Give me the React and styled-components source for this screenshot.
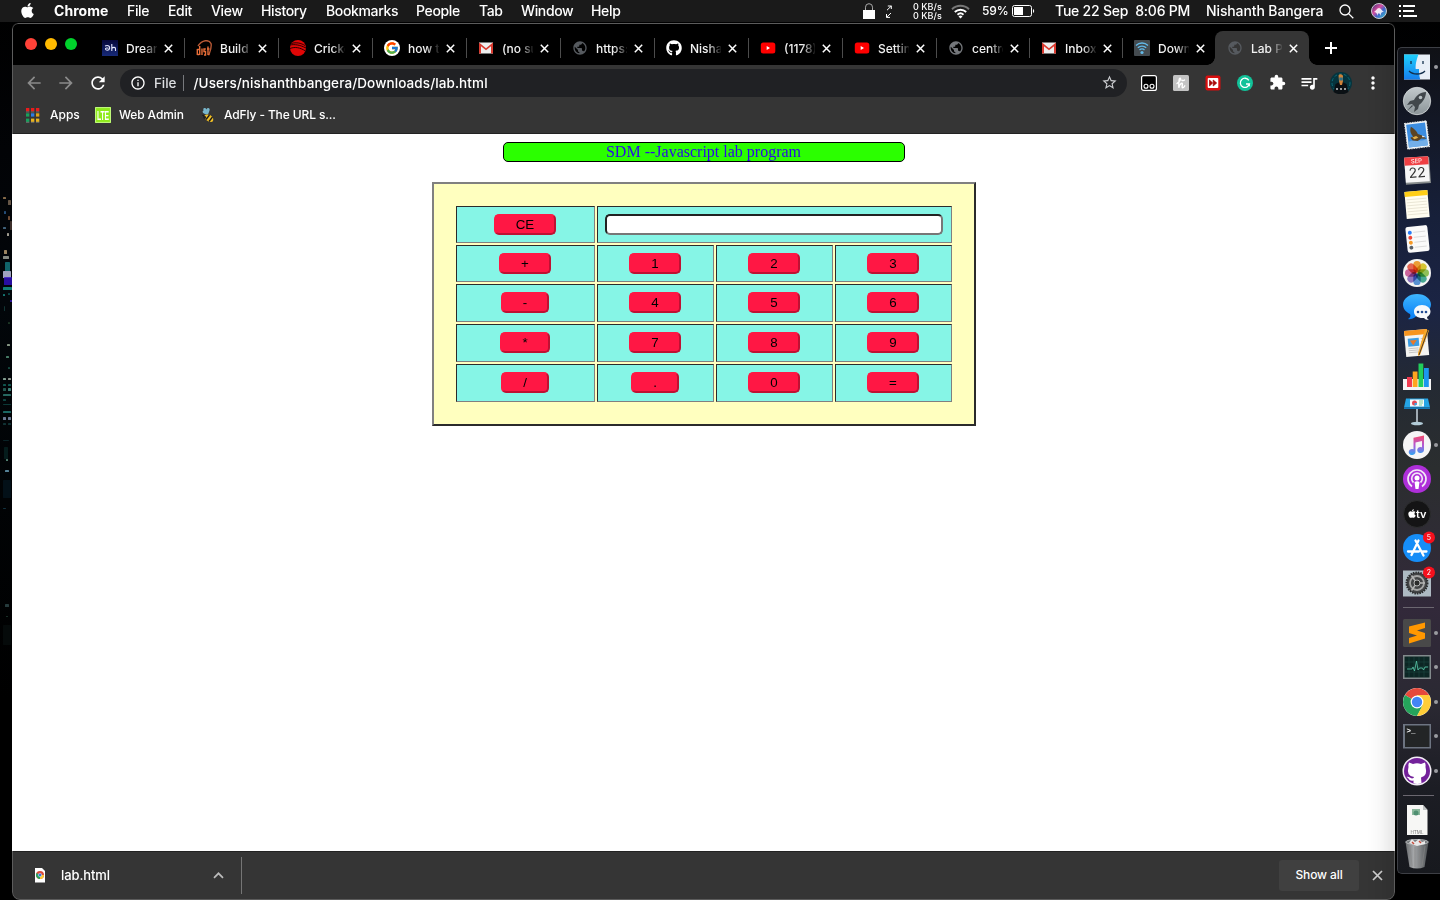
import React from "react";
import styled, { createGlobalStyle, css } from "styled-components";
import { FaApple, FaGithub } from "react-icons/fa";
import { FcGoogle } from "react-icons/fc";
import {
  MdArrowBack, MdArrowForward, MdRefresh, MdInfoOutline, MdStarBorder, MdExtension,
  MdQueueMusic, MdMoreVert, MdPublic,
} from "react-icons/md";

const Global = createGlobalStyle`
  html, body { margin: 0; padding: 0; background: #000; overflow: hidden; }
  * { box-sizing: border-box; }
  svg { display: block; flex: none; }
`;

const Desktop = styled.div`
  width: 1440px;
  height: 900px;
  overflow: hidden;
  display: flex;
  flex-direction: column;
  background: linear-gradient(#000 0, #020306 150px, #02060a 300px, #000 700px);
  color: #fff;
  font-family: Inter, "Liberation Sans", sans-serif;
`;

/* ---------- macOS menu bar ---------- */

const MenuBar = styled.header`
  flex: none;
  height: 22px;
  display: flex;
  align-items: center;
  background: #1a1a1a;
  font-size: 14px;
  font-weight: 500;
  line-height: 22px;
  white-space: pre;
`;
const AppleSlot = styled.div`
  width: 54px;
  padding: 0 0 2px 19px;
`;
const MenuItem = styled.span`
  width: ${(p) => p.$w}px;
  flex: none;
  font-weight: ${(p) => (p.$bold ? 700 : 500)};
  letter-spacing: ${(p) => (p.$bold ? 0.05 : -0.35)}px;
`;
const StatusItem = styled.div`
  width: ${(p) => p.$w}px;
  flex: none;
  font-size: ${(p) => p.$size || 14}px;
  letter-spacing: ${(p) => p.$ls || 0}px;
`;
const NetSpeed = styled.div`
  width: 38px;
  font-size: 9px;
  line-height: 9px;
  letter-spacing: 0.05px;
`;

/* ---------- workspace ---------- */

const Workspace = styled.div`
  flex: 1;
  display: flex;
  min-height: 0;
`;
const Wallpaper = styled.div`
  width: 12px;
  flex: none;
`;
const Window = styled.main`
  position: relative;
  width: 1383px;
  flex: none;
  margin-top: 1px;
  display: flex;
  flex-direction: column;
  border-radius: 6px 6px 8px 8px;
  overflow: hidden;
  background: #353535;
`;
const WindowShade = styled.div`
  position: absolute;
  inset: 0 0 0 auto;
  width: 28px;
  pointer-events: none;
  background: linear-gradient(to left, rgba(0, 0, 0, 0.1), rgba(0, 0, 0, 0.03) 14px, transparent);
`;
const WindowFrame = styled.div`
  position: absolute;
  inset: 0;
  pointer-events: none;
  border-radius: 6px 6px 8px 8px;
  border: 1px solid #5c5c5c;
  mix-blend-mode: lighten;
`;
const TabStrip = styled.div`
  height: 42px;
  flex: none;
  display: flex;
  background: #000;
`;
const TrafficLights = styled.div`
  width: 78px;
  display: flex;
  gap: 8px;
  padding: 15px 0 0 13px;
`;
const Light = styled.i`
  width: 12px;
  height: 12px;
  border-radius: 50%;
  background: ${(p) => p.$c};
`;
const Tab = styled.div`
  position: relative;
  width: ${(p) => p.$w}px;
  flex: none;
  height: 34px;
  margin-top: 8px;
  padding-left: 12px;
  display: flex;
  align-items: center;
  font-size: 12px;
  font-weight: 500;
  ${(p) => p.$active && css`
    background: #353535;
    border-radius: 8px 8px 0 0;
    &::before, &::after {
      content: "";
      position: absolute;
      bottom: 0;
      width: 8px;
      height: 8px;
    }
    &::before { left: -8px; background: radial-gradient(circle at 0 0, transparent 7.5px, #353535 8px); }
    &::after { right: -8px; background: radial-gradient(circle at 100% 0, transparent 7.5px, #353535 8px); }
  `}
`;
const TabTitle = styled.span`
  width: 31px;
  flex: none;
  margin-left: 8px;
  overflow: hidden;
  white-space: nowrap;
  color: #f1f1f1;
  -webkit-mask-image: linear-gradient(to right, #000 58%, transparent 104%);
  mask-image: linear-gradient(to right, #000 58%, transparent 104%);
`;
const TabClose = styled.svg`
  width: 9px;
  height: 9px;
  margin-left: 7px;
`;
const TabRule = styled.i`
  width: 1px;
  height: 20px;
  margin-left: ${(p) => p.$gap}px;
  flex: none;
  background: #4c4c4c;
`;
const NewTab = styled.div`
  padding: 19px 0 0 16px;
`;

const Toolbar = styled.div`
  height: 35px;
  flex: none;
  display: flex;
  align-items: center;
  padding-left: 12px;
`;
const NavSlot = styled.div`
  width: 32px;
  color: ${(p) => (p.$dim ? "#8b8b8b" : "#fff")};
`;
const AddressBar = styled.div`
  width: 1007px;
  height: 28px;
  border-radius: 14px;
  background: #202124;
  display: flex;
  align-items: center;
  padding: 0 9px 0 10px;
  font-size: 13.5px;
  font-weight: 500;
`;
const Scheme = styled.span`
  width: 29px;
  margin-left: 8px;
  color: #dcdee1;
  letter-spacing: -0.1px;
`;
const SchemeRule = styled.i`
  width: 1px;
  height: 16px;
  background: #77797d;
`;
const Path = styled.span`
  flex: 1;
  margin-left: 9.5px;
  letter-spacing: 0.1px;
`;
const Extensions = styled.div`
  display: flex;
  align-items: center;
  margin-left: 6px;
`;
const ExtSlot = styled.div`
  width: 32px;
  display: flex;
  justify-content: center;
`;
const Bookmarks = styled.div`
  height: 34px;
  flex: none;
  display: flex;
  align-items: center;
  padding: 0 0 4px 14px;
  border-bottom: 1px solid #222;
  font-size: 12px;
  font-weight: 500;
`;
const Bookmark = styled.div`
  width: ${(p) => p.$w}px;
  display: flex;
  align-items: center;
  gap: 8px;
  white-space: nowrap;
  letter-spacing: ${(p) => p.$ls || 0}px;
`;

/* ---------- the page ---------- */

const Page = styled.section`
  height: 717px;
  flex: none;
  background: #fff;
  padding-top: 7.5px;
  display: flex;
  flex-direction: column;
  align-items: center;
`;
const PageTitle = styled.div`
  width: 402px;
  height: 20px;
  flex: none;
  border: 1px solid #000;
  border-radius: 5px;
  background: #2bff00;
  color: #2a0be6;
  font: 16px/18px "Liberation Serif", serif;
  text-align: center;
`;
const Calculator = styled.div`
  margin: 20.5px 0 0 1px;
  border: 2px solid;
  border-color: #808080 #2b2b2b #2b2b2b #808080;
  background: #ffffbf;
  padding: 22px;
  display: grid;
  grid-template-columns: 139px 117px 117px 117px;
  grid-template-rows: 37px 37px 38px 38px 38px;
  gap: 2px;
`;
const Cell = styled.div`
  grid-column: span ${(p) => p.$span || 1};
  border: 1px solid;
  border-color: #2b2b2b #808080 #808080 #2b2b2b;
  background: #86f5e6;
  padding: 7px 8px 7px 7px;
  display: flex;
  justify-content: center;
  align-items: flex-start;
`;
const Key = styled.button`
  width: ${(p) => p.$w}px;
  height: 21px;
  padding: 0;
  border: 2px solid;
  border-color: #ff1744 #bf1133 #bf1133 #ff1744;
  border-radius: 5px;
  background: #ff1744;
  color: #000;
  font: 13.333px/17px "Liberation Sans", Arial, sans-serif;
`;
const Display = styled.input`
  width: 338px;
  height: 21px;
  border: 2px solid;
  border-color: #222 #777 #777 #222;
  border-radius: 5px;
  background: #fff;
`;

/* ---------- download shelf ---------- */

const Shelf = styled.footer`
  flex: 1;
  display: flex;
  align-items: center;
  border-top: 1px solid #222;
  padding: 0 11px 2px 22px;
`;
const Download = styled.div`
  width: 208px;
  height: 37px;
  display: flex;
  align-items: center;
  border-right: 1px solid #757575;
  font-size: 13px;
  font-weight: 500;
`;
const FileName = styled.span`
  width: 152px;
  margin-left: 15px;
  letter-spacing: -0.1px;
`;
const Spacer = styled.div`
  flex: 1;
`;
const ShowAll = styled.div`
  width: 80px;
  height: 31px;
  border-radius: 3px;
  background: #404040;
  font-size: 12px;
  font-weight: 500;
  line-height: 30px;
  text-align: center;
  margin-right: 12px;
  letter-spacing: -0.1px;
`;

/* ---------- dock ---------- */

const Dock = styled.aside`
  width: 43px;
  height: 827px;
  flex: none;
  margin: 25px 0 0 2px;
  padding: 1.5px 0;
  border: 1px solid #3d3f45;
  border-right: 0;
  border-radius: 5px 0 0 5px;
  background: linear-gradient(#101116 0, #17203a 170px, #1b2444 260px, #242a33 340px, #2b2e2f 420px, #32293a 560px, #2b2933 650px, #1c1d24 740px, #17191e 100%);
`;
const DockItem = styled.div`
  height: 34.4px;
  display: flex;
  align-items: center;
  padding-left: 4px;
`;
const DockDot = styled.i`
  width: 4px;
  height: 4px;
  border-radius: 50%;
  margin-left: 2px;
  background: #9a9ba0;
`;
const DockRule = styled.div`
  height: ${(p) => p.$h}px;
  display: flex;
  align-items: center;
  &::after {
    content: "";
    height: 1px;
    width: 31px;
    margin-left: 5px;
    background: #6b6770;
  }
`;
const Picture = styled.svg`
  width: 30px;
  height: 34px;
  overflow: visible;
`;

/* ---------- drawings ---------- */

const lights = [
  [3, 197, 3, 2, "#a9865a"], [8, 200, 3, 5, "#7f6b58"], [4, 211, 2, 3, "#2d5f93"], [8, 216, 2, 4, "#8c5c3d"],
  [3, 227, 3, 2, "#507b9a"], [7, 233, 2, 3, "#c8c3b4"], [10, 221, 2, 9, "#4c3b34"], [4, 250, 3, 4, "#c1a478"],
  [3, 256, 6, 3, "#a6aaa0"], [5, 262, 5, 9, "#147b82"], [3, 271, 8, 7, "#c7c9ee"], [4, 277, 8, 8, "#3210c5"],
  [3, 287, 9, 3, "#159d90"], [3, 294, 2, 2, "#1c9791"], [8, 293, 2, 2, "#135c5b"], [10, 300, 2, 2, "#391ac0"],
  [4, 306, 1, 5, "#16413e"], [8, 322, 2, 2, "#24442c"], [7, 344, 3, 2, "#a9bba5"], [6, 356, 3, 2, "#589a7d"],
  [8, 367, 2, 2, "#1a5b4d"], [3, 378, 3, 2, "#a1c3b1"], [8, 378, 3, 2, "#b3bdb2"], [3, 384, 3, 2, "#146a62"], [8, 384, 3, 2, "#146a62"],
  [3, 388, 3, 3, "#2c6c61"], [8, 388, 3, 3, "#4c9c91"], [3, 394, 8, 2, "#2f7f77"], [3, 399, 3, 2, "#11544f"], [3, 404, 8, 1, "#0e4643"],
  [3, 411, 8, 2, "#22817a"], [3, 417, 3, 3, "#8497b6"], [8, 417, 3, 3, "#8497b6"], [3, 423, 3, 2, "#143f40"], [8, 423, 3, 2, "#143f40"], [3, 440, 6, 1, "#0c2c2f"],
  [4, 447, 4, 12, "#062322"], [6, 459, 2, 2, "#68a38e"], [5, 470, 4, 2, "#6ba2bb"], [3, 480, 8, 18, "#04141d"],
  [3, 508, 3, 1, "#164050"], [5, 604, 4, 3, "#304a4b"], [6, 616, 2, 1, "#24463a"], [3, 625, 8, 20, "#060c0c"],
];
const CityLights = () => (
  <svg width="12" height="877" viewBox="0 22 12 877">
    {lights.map(([x, y, w, h, f]) => <rect key={`${x}-${y}`} x={x} y={y} width={w} height={h} rx="0.6" fill={f} opacity="0.8" />)}
  </svg>
);

const Cross = () => <TabClose viewBox="0 0 9 9"><path d="M.8.8l7.400 7.400M8.200.8L.8 8.200" stroke="#fff" strokeWidth="1.500" /></TabClose>;
const Plus = () => <svg width="12" height="12" viewBox="0 0 12 12"><path d="M6 0v12M0 6h12" stroke="#fff" strokeWidth="2" /></svg>;
const Lock = () => (
  <svg width="12" height="16" viewBox="0 0 12 16"><path d="M2.500 7V4.200a3.500 3.500 0 0 1 7 0V7" fill="none" stroke="#aaa" /><path d="M0 7h12v9H0z" fill="#fff" /></svg>
);
const Expand = () => (
  <svg width="6" height="13" viewBox="0 0 6 13" fill="none" stroke="#fff" strokeWidth="1"><path d="M1.800 1H5.300V4M5.300 1L1 5.200M.5 9v3.400H4M.7 12.200L5 8" /></svg>
);
const Wifi = () => (
  <svg width="19" height="15" viewBox="0 0 19 15" fill="none" stroke="#fff" strokeWidth="1.900"><path d="M1 5.200a12.300 12.300 0 0 1 17 0" stroke="#777" /><path d="M3.800 8a8.300 8.300 0 0 1 11.400 0M6.500 10.700a4.500 4.500 0 0 1 6 0" /><path d="M9.500 14.500l-2-2a3 3 0 0 1 4 0z" fill="#fff" stroke="none" /></svg>
);
const Battery = () => (
  <svg width="23" height="12" viewBox="0 0 23 12"><rect x=".5" y=".5" width="19" height="11" rx="2" fill="none" stroke="#fff" /><path d="M2 2h9v8H2z" fill="#fff" /><path d="M21 4v4c1.600-.5 1.600-3.500 0-4z" fill="#fff" /></svg>
);
const Search = () => (
  <svg width="15" height="15" viewBox="0 0 15 15" fill="none" stroke="#fff" strokeWidth="1.300"><circle cx="6" cy="6" r="5" /><path d="M9.600 9.600l4.700 4.700" /></svg>
);
const Siri = () => (
  <svg width="16" height="16" viewBox="0 0 16 16">
    <defs><linearGradient id="siri" x1="0" y1="0" x2="1" y2="1"><stop offset="0" stopColor="#342a72" /><stop offset=".4" stopColor="#d54c9e" /><stop offset=".6" stopColor="#4065c8" /><stop offset="1" stopColor="#39d3cd" /></linearGradient></defs>
    <circle cx="8" cy="8" r="7.500" fill="url(#siri)" stroke="#c9c9d2" />
    <path d="M3 9c2-1 3-4 5-4s3 3 5 4c-2 0-3 0-3.500 4C9 10 7 9 6.500 13 6 10 5 9 3 9z" fill="#fff" opacity=".85" />
  </svg>
);
const ListIcon = () => (
  <svg width="18" height="12" viewBox="0 0 18 12" fill="#fff"><path d="M0 0h2v2H0zM4 0h12v2H4zM0 5h2v2H0zM4 5h11v2H4zM0 10h2v2H0zM4 10h14v2H4z" /></svg>
);

const Fav = ({ kind }) => {
  switch (kind) {
    case "dream":
      return <svg width="16" height="16" viewBox="0 0 16 16"><defs><linearGradient id="dh" x2="0" y2="1"><stop stopColor="#07083a" /><stop offset="1" stopColor="#172a78" /></linearGradient></defs><path d="M0 0h16v16H0z" fill="url(#dh)" /><path d="M3 6c3.500-1.200 5 .3 4.600 2.500-.6 2.200-4.100 2.200-4.100.3C3.500 7.800 5.500 7.800 6.500 8.300M9.800 4v7M9.800 8.300c1.500-1.500 3.700-1.200 3.700.5V11" fill="none" stroke="#e8eaff" strokeWidth="1.100" /></svg>;
    case "build":
      return <svg width="16" height="16" viewBox="0 0 16 16" fill="none" stroke="#e66d38"><path d="M2 6C6 0 13-1 15 3.500c1 3-1 8-2 11" stroke="#b75935" strokeWidth="1.400" /><path d="M3.700 6v9M1.300 9.500h1.800M1.300 9v6M1.300 14.500h2M6 8.500V15M8 15h1.500v-3.500H8V9h1.800M12 6.500v8.500M11 9h2.500M12 14.500h1.500" strokeWidth="1.400" /></svg>;
    case "cricket":
      return <svg width="16" height="16" viewBox="0 0 16 16"><circle cx="8" cy="8" r="8" fill="#e00606" /><path d="M0 5c5-1 10 0 16 3M0 8.500c5-2 10-1 15.500 2.500M1.500 3.500C6 2 11 3 15 5.500" fill="none" stroke="#160000" strokeWidth=".9" /></svg>;
    case "google":
      return <svg width="16" height="16" viewBox="0 0 16 16"><circle cx="8" cy="8" r="8" fill="#fff" /><FcGoogle x="1" y="1" size={14} /></svg>;
    case "gmail":
      return <svg width="16" height="16" viewBox="0 0 16 16"><path d="M1 2.500h14v11H1z" fill="#eee" /><path d="M1 13.500v-11l7 5.700 7-5.700v11h-2V6.300L8 10.200 3 6.300v7.200z" fill="#d93a2f" /></svg>;
    case "github":
      return <FaGithub size={16} color="#fff" />;
    case "youtube":
      return <svg width="16" height="16" viewBox="0 0 16 16"><rect x=".8" y="2.500" width="14.500" height="11" rx="2.500" fill="#f00" /><path d="M6.700 6v4L10 8z" fill="#fff" /></svg>;
    case "wifi":
      return <svg width="16" height="16" viewBox="0 0 16 16"><rect width="16" height="16" rx="1" fill="#444b50" /><g fill="none" stroke="#62b9e8" strokeWidth="1.300"><path d="M2 5.500a8.500 8.500 0 0 1 12 0M3.800 7.800a6 6 0 0 1 8.400 0M5.500 10a3.500 3.500 0 0 1 5 0" /></g><circle cx="8" cy="12.500" r="1.600" fill="#62b9e8" /></svg>;
    case "globeLight":
      return <MdPublic size={16} color="#74777b" />;
    default:
      return <MdPublic size={16} color="#565a5f" />;
  }
};

const AppsGrid = () => (
  <svg width="16" height="16" viewBox="0 0 16 16">
    {["#e91c1c", "#e91c1c", "#e91c1c", "#18a05c", "#2c7be5", "#e0a114", "#18a05c", "#e8b21d", "#e8b21d"].map((c, i) => (
      <rect key={i} x={(i % 3) * 5} y={1 + Math.floor(i / 3) * 5.3} width="3.300" height="3.300" fill={c} />
    ))}
    <path d="M0 5h3.300M5 5h3.300M10 5h3.300M0 15.300h3.300M5 15.300h3.300M10 15.300h3.300" stroke="#888" strokeWidth=".7" />
  </svg>
);
const Lte = () => (
  <svg width="16" height="16" viewBox="0 0 16 16"><path d="M0 0h16v16H0z" fill="#8fea1b" /><rect x=".7" y=".7" width="14.600" height="14.600" fill="none" stroke="#d8ffae" strokeWidth=".7" /><text transform="translate(8 13) scale(1 2)" textAnchor="middle" fontFamily="Liberation Sans" fontWeight="700" fontSize="6.800" fill="#fff">LTE</text></svg>
);
const Bee = () => (
  <svg width="16" height="16" viewBox="0 0 16 16"><path d="M7 7.500C3 7 1.500 4.500 3.500 3.500c-1-3 2-3 3-1 1-2.500 4-1.500 3 1s-1 4-2.500 4z" fill="#78b6cb" /><path d="M4.500 8.500c2-2 6-1 7.500 1 2 2 1.500 5.500-.5 5.500-4 0-7.500-3-7-6.500z" fill="#edbd26" /><path d="M6 12.500l3.500-4.500M9 14.500l3.500-4.500M2.500 8l2 1.500" stroke="#191919" strokeWidth="1.300" /><circle cx="4.700" cy="10.500" r="1.400" fill="#222" /></svg>
);

const ExtDots = () => <svg width="16" height="16" viewBox="0 0 16 16"><rect x=".6" y=".6" width="14.800" height="14.800" rx="2" fill="#000" stroke="#fff" strokeWidth="1.200" /><g fill="none" stroke="#fff" strokeWidth="1.100"><circle cx="5" cy="11.300" r="2" /><circle cx="11" cy="11.300" r="2" /></g></svg>;
const Honey = () => <svg width="16" height="16" viewBox="0 0 16 16"><rect width="16" height="16" rx="1.500" fill="#c3c3c3" /><path d="M4 8.500C7 6.500 8.200 3.500 7.200 3.200S5.600 6 5.800 12.800C6.200 9.500 9 7 9.400 8.800c.2 1.500-1 4 .4 4 .9 0 1.500-1 2-2M8.800 5.200c1 .6 1.800.6 2.700-.2" fill="none" stroke="#fff" strokeWidth="1.400" strokeLinecap="round" /></svg>;
const Forward = () => <svg width="16" height="16" viewBox="0 0 16 16"><rect x=".5" y=".5" width="15" height="15" rx="2" fill="#d80e0e" /><rect x="2.700" y="3" width="10.600" height="10" rx="1" fill="#fff" /><path d="M4.500 5v6l3.200-3zM8.200 5v6l3.500-3z" fill="#a80505" stroke="#a80505" strokeWidth=".7" /></svg>;
const Grammar = () => <svg width="16" height="16" viewBox="0 0 16 16"><circle cx="8" cy="8" r="8" fill="#12c299" /><path d="M11.800 5.300A4.600 4.600 0 1 0 12.400 9H9M12.300 8.500v2.800" fill="none" stroke="#fff" strokeWidth="1.300" /></svg>;
const Avatar = () => <svg width="22" height="22" viewBox="0 0 22 22"><circle cx="11" cy="11" r="11" fill="#06343d" /><circle cx="11" cy="11" r="9" fill="none" stroke="#0d6a7a" strokeDasharray="3 2" /><path d="M3.500 20l2-8 4-2 1.500 3 1.500-3 4 2 2 8c-4 3-11 3-15 0z" fill="#0a1014" /><path d="M8.500 3.500c1-2 5-1.500 4.500 1.500v4l-1 4h-2l-1-4z" fill="#cf8238" /><path d="M9.300 5.500h3.500v3H9.300z" fill="#2e6f86" /><path d="M6 17h2M10 17h2M14 17h2" stroke="#ccc" strokeWidth="1.300" /></svg>;

const FileIcon = () => (
  <svg width="12" height="15" viewBox="0 0 12 15"><path d="M1 0h7l3 3v11.500H1z" fill="#fff" /><circle cx="6" cy="7" r="4" fill="#dd4b39" /><path d="M6 7L2.500 5A4 4 0 0 0 6 11z" fill="#22a45d" /><path d="M6 7h4a4 4 0 0 1-4 4z" fill="#fc3" /><circle cx="6" cy="7" r="1.700" fill="#3c78e0" stroke="#fff" strokeWidth=".4" /></svg>
);

const Pic = ({ children }) => <Picture viewBox="-15 -17 30 34">{children}</Picture>;
const Badge = ({ n }) => (
  <g><circle cx="12" cy="-10.500" r="6" fill="#f5101d" /><text x="12" y="-8" textAnchor="middle" fontFamily="Inter" fontSize="7" fill="#fff">{n}</text></g>
);
const petals = ["#f59a23", "#dcc81e", "#8bc34a", "#36a78e", "#4a8edb", "#8a6cc4", "#d0599b", "#ec5a45"];

const DockIcon = ({ kind }) => {
  switch (kind) {
    case "finder":
      return <Pic><defs><linearGradient id="fd" x2="0" y2="1"><stop stopColor="#1fd0fd" /><stop offset="1" stopColor="#167fee" /></linearGradient></defs><path d="M-13-12.500h26v25h-26z" fill="#e8eff7" /><path d="M-13-12.500H1.500C-1-6-1.500-2-1.300 2H2c0 4 .3 7 1.200 10.500H-13z" fill="url(#fd)" /><path d="M-6-6v3M6-6v3M-8 4c4 4 12 4 16 0" fill="none" stroke="#15314e" strokeWidth="1.300" /></Pic>;
    case "launchpad":
      return <Pic><defs><linearGradient id="lp" x2="0" y2="1"><stop stopColor="#c3cacd" /><stop offset="1" stopColor="#8b9498" /></linearGradient></defs><circle r="13.700" fill="url(#lp)" stroke="#d5d9db" strokeWidth=".8" /><path d="M9-9C3-9-1-5-3-1l-4 1-3 4 5-1 3 3-1 5 4-3 1-4C5 2 9-3 9-9z" fill="#41474b" /><circle cx="3.500" cy="-3.500" r="1.800" fill="#b8c0c3" /><path d="M-5 4l-5 6 6-5z" fill="#41474b" /></Pic>;
    case "mail":
      return <Pic><g transform="rotate(-7)"><path d="M-11-13h22v26h-22z" fill="#f5f7f8" stroke="#dce2e6" strokeDasharray="1.500 1" /><path d="M-9.500-11.500H9.500v23H-9.500z" fill="#3c8de0" /><path d="M-9.500 6C-3 3 3 8 9.500 5v6.500H-9.500z" fill="#73afe9" /><path d="M-5-9c3 2 5 5 6 8l4 2 4 4-5-1-4 2-5-1-2-3 3-1c-2-3-3-6-1-10z" fill="#5b4425" /><path d="M-5 2l4-1 2 2-4 1z" fill="#e3b04b" /><path d="M5 1l3 2h-3z" fill="#fff" /></g></Pic>;
    case "calendar":
      return <Pic><g transform="rotate(-4)"><path d="M-12-12h25v26h-25z" fill="#878c8c" /><path d="M-12-13h24v25h-24z" fill="#f6f6f6" /><path d="M-12-13h24v8h-24z" fill="#ef3f43" /><text y="-6.800" textAnchor="middle" fontFamily="Inter" fontSize="6" fill="#fff">SEP</text><text y="7.500" textAnchor="middle" fontFamily="Inter" fontSize="14" fill="#333">22</text></g></Pic>;
    case "notes":
      return <Pic><g transform="rotate(-5)"><path d="M-11.500-13h23v27h-23z" fill="#fffdf0" /><path d="M-11.500-13h23v5h-23z" fill="#ffce16" /><path d="M-10-5h20M-10-2h20M-10 1h20M-10 4h20M-10 7h20M-10 10h20" stroke="#e1dccb" strokeWidth=".7" /></g></Pic>;
    case "reminders":
      return <Pic><g transform="rotate(-6)"><rect x="-10.500" y="-13" width="22" height="26" rx="2.500" fill="#fafafa" /><path d="M-3-7H9M-3-2H9M-3 3H9M-3 8H9" stroke="#d5d5d5" strokeWidth=".8" />{["#2a7cf6", "#ef4638", "#f69a27", "#596068"].map((c, i) => <circle key={c} cx="-6.500" cy={-7 + i * 5} r="2" fill={c} />)}</g></Pic>;
    case "photos":
      return <Pic><circle r="14" fill="#f4f4f2" />{petals.map((c, i) => <rect key={c} x="-3.700" y="-12" width="7.400" height="11.500" rx="3.600" fill={c} opacity=".9" style={{ mixBlendMode: "multiply" }} transform={`rotate(${i * 45})`} />)}</Pic>;
    case "messages":
      return <Pic><defs><linearGradient id="ms" x2="0" y2="1"><stop stopColor="#3eb6ff" /><stop offset="1" stopColor="#087df5" /></linearGradient></defs><path d="M0-13c8 0 14 5 14 10.500S8 8 0 8c-1 2-5 5-9 4 2-1 3-3 2-5-4-2-7-5-7-9.500C-14-8-8-13 0-13z" fill="url(#ms)" /><path d="M5-2c5 0 8.500 3 8.500 6.500C13.500 7 12 9 10 10c0 1.500 1 2.500 2 3-3 0-4-1-5-2C1 11.500-3 9-3 4.500-3 1 0-2 5-2z" fill="#f7f9fb" /><g fill="#234d94"><circle cx="1" cy="5" r="1.300" /><circle cx="5" cy="5" r="1.300" /><circle cx="9" cy="5" r="1.300" /></g></Pic>;
    case "pages":
      return <Pic><g transform="rotate(-5)"><path d="M-12-12h23v26h-23z" fill="#f4f4f1" /><path d="M-12-12h23v5h-23z" fill="#f7951e" /><path d="M-9-4H2v8H-9z" fill="#3c9de4" /><path d="M-7-2h7l-4 5z" fill="#e97928" /><path d="M4-3h5M4 0h5M-9 6H1M-9 8H1M-9 10H1" stroke="#bbb" strokeWidth=".8" /></g><path d="M8-13l4 1.500L3 13l-2 1V11z" fill="#f4a82b" /><path d="M11-12L2 13" stroke="#503b26" /></Pic>;
    case "numbers":
      return <Pic><path d="M-14 3h28v11h-28z" fill="#f4f4f4" /><path d="M-10 1h5v10h-5z" fill="#f03b50" /><path d="M-4.300-4.500h4.800v15.500h-4.800z" fill="#ffa51f" /><path d="M1.500-12.500h4.800v23.500H1.500z" fill="#21cf5b" /><path d="M7-8h4.800v19H7z" fill="#1c97ef" /></Pic>;
    case "keynote":
      return <Pic><path d="M-11-12.500h22l2 9h-26z" fill="#25a5e6" /><path d="M-7-11.500H7v7H-7z" fill="#f8fafb" /><circle cx="-2.500" cy="-8" r="2.500" fill="#e24a55" /><path d="M-2.500-8h2.500a2.500 2.500 0 0 1-2.500 2.500z" fill="#39a7e8" /><path d="M2-10h4M2-8h4M2-6h3" stroke="#7c9" /><path d="M-13-3.500h26v1.500h-26z" fill="#1479b7" /><path d="M0-2v14" stroke="#b7c2ca" strokeWidth="1.700" /><ellipse cy="12.500" rx="6" ry="1.800" fill="#b2ccd8" /></Pic>;
    case "music":
      return <Pic><defs><linearGradient id="mu" x2="0" y2="1"><stop stopColor="#f34a6a" /><stop offset=".5" stopColor="#b357d6" /><stop offset="1" stopColor="#2fa5f3" /></linearGradient></defs><circle r="14" fill="#f6f5f6" /><path d="M-3.500-7.200L7-9.500V5a3.400 3 0 1 1-2-2.700V-4l-6.500 1.400V7a3.400 3 0 1 1-2-2.700z" fill="url(#mu)" /></Pic>;
    case "podcasts":
      return <Pic><circle r="14" fill="#ae2fd9" /><g fill="none" stroke="#f2e6f6" strokeWidth="1.700"><path d="M-5 7.500a9 9 0 1 1 10 0M-3.500 3.500a5.300 5.300 0 1 1 7 0" /></g><circle cy="-1" r="2.500" fill="#fff" /><path d="M-2.500 3q2.500-1.500 5 0L1.500 10h-3z" fill="#fff" /></Pic>;
    case "tv":
      return <Pic><circle r="13.500" fill="#141415" stroke="#2c2d2e" /><FaApple x="-10" y="-5.500" size={10} color="#fff" /><text x="-1" y="3.500" fontFamily="Inter" fontWeight="600" fontSize="11" fill="#fff">tv</text></Pic>;
    case "store":
      return <Pic><circle r="14" fill="#168df7" /><path d="M1.500-7.500L-5.500 7M-1.500-7.500L6.500 7.500M-9 3.500H2M6 3.500h3.500" stroke="#fff" strokeWidth="2.300" strokeLinecap="round" /><Badge n="5" /></Pic>;
    case "prefs":
      return <Pic><path d="M-14-12.500h28v26h-28z" fill="#aebac3" /><circle r="10.500" fill="#434446" stroke="#2c2d2f" strokeWidth="2" strokeDasharray="1.500 1" /><circle r="7" fill="none" stroke="#a5a5a5" strokeWidth="1.800" /><circle r="3" fill="#2b2b2b" stroke="#b5b5b5" /><path d="M3 0h5M-2-2.500l-3.500-5M-2 2.500l-3.500 5" stroke="#b5b5b5" strokeWidth="1.500" /><Badge n="2" /></Pic>;
    case "sublime":
      return <Pic><rect x="-14" y="-14" width="28" height="28" rx="1.500" fill="#494949" /><path d="M-8 -6.500 L8 -10.500 V-5 L0 -2.500 L8 0 V5.500 L-8 10.500 V5 L0 2.500 L-8 0 Z" fill="#ff9800" /></Pic>;
    case "activity":
      return <Pic><path d="M-14-12h28v24h-28z" fill="#828a8c" /><path d="M-12.500-10.500h25v21h-25z" fill="#0c2624" /><path d="M-12-5h24M-12 0h24M-12 5h24M-8-10v20M-3-10v20M2-10v20M7-10v20" stroke="#1d4740" strokeWidth=".6" /><path d="M-10 2h5l1-2 1.500 4 2-10 1.500 9 1.500-2h3l1 2 1.500-3h3" fill="none" stroke="#54bda0" strokeWidth=".9" /></Pic>;
    case "chrome":
      return <Pic><circle r="14" fill="#fff" /><path d="M0 0L-12.100-7A14 14 0 0 1 12.100-7z" fill="#e64a3b" /><path d="M0 0L-12.100-7A14 14 0 0 0 0 14L6 3z" fill="#25a45b" /><path d="M0 0L5.500 3.500 0 14A14 14 0 0 0 12.100-7H0z" fill="#ffcd38" /><circle r="6.400" fill="#fff" /><circle r="5.200" fill="#4285f4" /></Pic>;
    case "terminal":
      return <Pic><path d="M-14-12h28v24.500h-28z" fill="#6d7481" /><path d="M-12-10.500h24.500v21.500H-12z" fill="#232526" /><text x="-10.500" y="-3" fontFamily="Liberation Mono" fontWeight="700" fontSize="7.500" fill="#fff">&gt;_</text></Pic>;
    case "desktop":
      return <Pic><circle r="14.500" fill="#f3edf6" /><circle r="13" fill="#73219a" /><path d="M-8-8.500l4 1.500q4-1.500 8 0l4-1.500q1 3 .5 4.500Q11 5 4 6.500L4.500 12.200q-4.500 1.500-8 0v-2.700c-5 1-4-2.500-7-3.500 3-1 4 2.500 7 1L-3 6Q-11 5-8.500-4-9-6-8-8.500z" fill="#fff" /></Pic>;
    case "html":
      return <Pic><path d="M-10-15H6l4.500 5v25H-10z" fill="#f7f7f5" /><path d="M6-15v5h4.500z" fill="#bfc2c2" /><path d="M-5-11H3v6h-8z" fill="#8bb89c" /><circle cx="-1" cy="-7" r="2.500" fill="#4f8f71" /><text y="13.500" textAnchor="middle" fontFamily="Inter" fontSize="4.500" fill="#777">HTML</text></Pic>;
    default:
      return <Pic><defs><linearGradient id="tr"><stop stopColor="#686b6e" /><stop offset=".35" stopColor="#a4a6a8" /><stop offset="1" stopColor="#4f5356" /></linearGradient></defs><path d="M-11.500-12h23L7.500 13q-7.500 3-15 0z" fill="url(#tr)" /><ellipse cy="-12" rx="11.300" ry="2.500" fill="#777b7e" stroke="#b3b5b7" /><path d="M-8-11l3-4 3 3 4-3 3 3 3-1v3l-8 2z" fill="#e8e8e8" /><path d="M-5-12l2 2M2-13l2 2" stroke="#c84b3b" strokeWidth="1.500" /><path d="M-7-8L-5 12M-2-7v20M3-7L2 13M8-8L5 12" stroke="#888" strokeWidth=".6" /></Pic>;
  }
};

/* ---------- data ---------- */

const menus = [
  ["Chrome", 73, true], ["File", 41], ["Edit", 43], ["View", 50], ["History", 65], ["Bookmarks", 90],
  ["People", 63], ["Tab", 42], ["Window", 70], ["Help", 60],
];
const tabs = [
  ["dream", "Dream11"], ["build", "Build an"], ["cricket", "Cricket"], ["google", "how to"], ["gmail", "(no subject"],
  ["globe", "https:"], ["github", "Nishant"], ["youtube", "(1178)"], ["youtube", "Settings"], ["globeLight", "centre", 93],
  ["gmail", "Inbox (", 93], ["wifi", "Downl", 93],
];
const dockApps = [
  ["finder", true], ["launchpad"], ["mail"], ["calendar"], ["notes"], ["reminders"], ["photos"], ["messages"],
  ["pages"], ["numbers"], ["keynote"], ["music", true], ["podcasts"], ["tv"], ["store"], ["prefs"],
];
const dockOpen = ["sublime", "activity", "chrome", "terminal", "desktop"];
const extensions = [
  [ExtDots], [Honey], [Forward], [Grammar], [MdExtension, 17], [MdQueueMusic, 20], [Avatar], [MdMoreVert, 20],
];
const keys = [
  ["+", 52], ["1", 52], ["2", 52], ["3", 52],
  ["-", 48], ["4", 52], ["5", 52], ["6", 52],
  ["*", 50], ["7", 52], ["8", 52], ["9", 52],
  ["/", 48], [".", 48], ["0", 52], ["=", 52],
];

export default function App() {
  return (
    <Desktop>
      <Global />
      <MenuBar>
        <AppleSlot><FaApple size={17} /></AppleSlot>
        {menus.map(([label, w, bold]) => <MenuItem key={label} $w={w} $bold={bold}>{label}</MenuItem>)}
        <Spacer />
        <StatusItem $w={23}><Lock /></StatusItem>
        <StatusItem $w={27}><Expand /></StatusItem>
        <NetSpeed>0 KB/s<br />0 KB/s</NetSpeed>
        <StatusItem $w={31}><Wifi /></StatusItem>
        <StatusItem $w={30} $size={12} $ls={-0.1}>59%</StatusItem>
        <StatusItem $w={43}><Battery /></StatusItem>
        <StatusItem $w={151} $ls={-0.22}>Tue 22 Sep  8:06 PM</StatusItem>
        <StatusItem $w={133} $ls={-0.12}>Nishanth Bangera</StatusItem>
        <StatusItem $w={32}><Search /></StatusItem>
        <StatusItem $w={28}><Siri /></StatusItem>
        <StatusItem $w={41}><ListIcon /></StatusItem>
      </MenuBar>
      <Workspace>
        <Wallpaper><CityLights /></Wallpaper>
        <Window>
          <TabStrip>
            <TrafficLights><Light $c="#ff4238" /><Light $c="#ffba00" /><Light $c="#00d22c" /></TrafficLights>
            {tabs.map(([kind, title, w = 94], i) => (
              <Tab key={title} $w={w}>
                <Fav kind={kind} />
                <TabTitle>{title}</TabTitle>
                <Cross />
                {i < tabs.length - 1 && <TabRule $gap={w - 83} />}
              </Tab>
            ))}
            <Tab $w={94} $active>
              <Fav kind="globe" />
              <TabTitle>Lab Pr</TabTitle>
              <Cross />
            </Tab>
            <NewTab><Plus /></NewTab>
          </TabStrip>
          <Toolbar>
            <NavSlot $dim><MdArrowBack size={20} /></NavSlot>
            <NavSlot $dim><MdArrowForward size={20} /></NavSlot>
            <NavSlot><MdRefresh size={20} /></NavSlot>
            <AddressBar>
              <MdInfoOutline size={16} />
              <Scheme>File</Scheme>
              <SchemeRule />
              <Path>/Users/nishanthbangera/Downloads/lab.html</Path>
              <MdStarBorder size={17} color="#c9cbce" />
            </AddressBar>
            <Extensions>
              {extensions.map(([Icon, size], i) => <ExtSlot key={i}><Icon size={size} /></ExtSlot>)}
            </Extensions>
          </Toolbar>
          <Bookmarks>
            <Bookmark $w={69}><AppsGrid />Apps</Bookmark>
            <Bookmark $w={105} $ls={-0.12}><Lte />Web Admin</Bookmark>
            <Bookmark $w={150} $ls={-0.12}><Bee />AdFly - The URL s...</Bookmark>
          </Bookmarks>
          <Page>
            <PageTitle>SDM --Javascript lab program</PageTitle>
            <Calculator>
              <Cell><Key $w={62}>CE</Key></Cell>
              <Cell $span={3}><Display readOnly /></Cell>
              {keys.map(([k, w]) => <Cell key={k}><Key $w={w}>{k}</Key></Cell>)}
            </Calculator>
          </Page>
          <Shelf>
            <Download>
              <FileIcon />
              <FileName>lab.html</FileName>
              <svg width="11" height="8" viewBox="0 0 11 8"><path d="M1 6.800l4.500-4.500L10 6.800" fill="none" stroke="#bbb" strokeWidth="1.700" /></svg>
            </Download>
            <Spacer />
            <ShowAll>Show all</ShowAll>
            <svg width="13" height="13" viewBox="0 0 13 13"><path d="M2 2l9 9M11 2l-9 9" stroke="#d0d0d0" strokeWidth="1.700" /></svg>
          </Shelf>
          <WindowShade />
          <WindowFrame />
        </Window>
        <Dock>
          {dockApps.map(([kind, open]) => <DockItem key={kind}><DockIcon kind={kind} />{open && <DockDot />}</DockItem>)}
          <DockRule $h={16} />
          {dockOpen.map((kind) => <DockItem key={kind}><DockIcon kind={kind} /><DockDot /></DockItem>)}
          <DockRule $h={15} />
          <DockItem><DockIcon kind="html" /></DockItem>
          <DockItem><DockIcon kind="trash" /></DockItem>
        </Dock>
      </Workspace>
    </Desktop>
  );
}
